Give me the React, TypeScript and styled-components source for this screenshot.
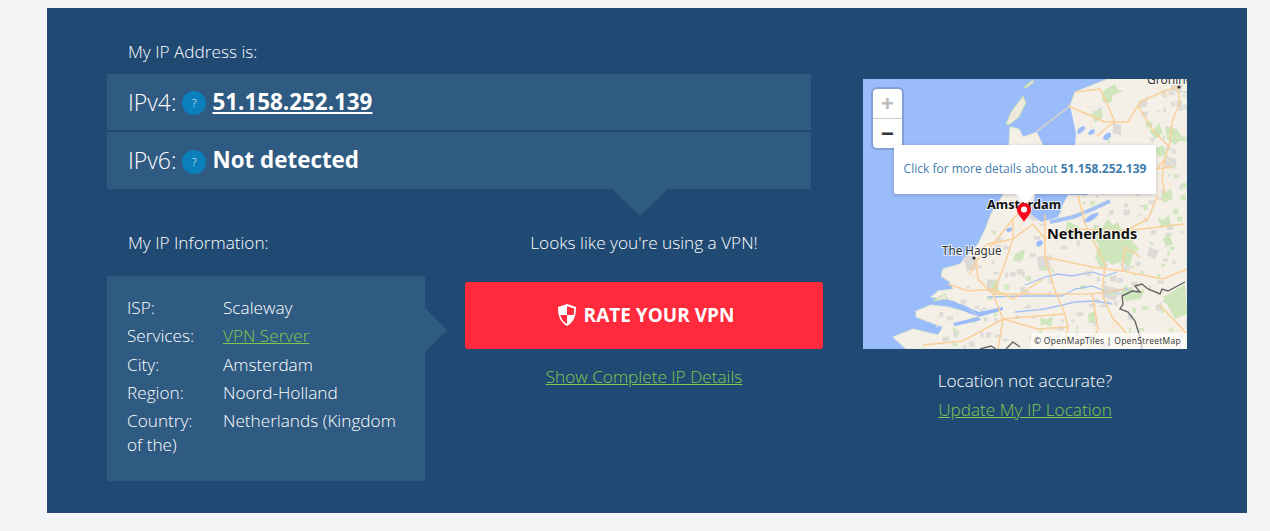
import React from "react";
import styled, { createGlobalStyle } from "styled-components";

const GlobalStyle = createGlobalStyle`
  html, body {
    margin: 0;
    background: #f2f4f6;
  }
  body {
    font-family: "Open Sans", "Liberation Sans", sans-serif;
    font-size: 17.2px;
    line-height: 24px;
    color: #fff;
    font-weight: 350;
  }
`;

const Page = styled.div`
  padding: 8px 0 18px 47px;
`;

const Panel = styled.section`
  width: 1200px;
  height: 505px;
  box-sizing: border-box;
  background: #204a73;
  padding: 32px 60px 0;
  display: flex;
  gap: 40px;
`;

const LeftCol = styled.div`
  width: 716px;
  flex: none;
`;

const Heading = styled.div`
  padding-left: 21px;
`;

const IpRows = styled.div`
  width: 704px;
  margin-top: 10px;
  display: flex;
  flex-direction: column;
  gap: 2px;
  position: relative;

  &::after {
    content: "";
    position: absolute;
    left: 505px;
    top: 100%;
    border-style: solid;
    border-width: 27px 28px 0;
    border-color: #2f5a82 transparent transparent;
  }
`;

const IpRow = styled.div<{ $h: number }>`
  height: ${(p) => p.$h}px;
  box-sizing: border-box;
  background: #2f5a82;
  padding: 0 0 1px 21px;
  display: flex;
  align-items: center;
  font-size: 23px;
  font-weight: 300;
`;

const Badge = styled.span`
  width: 24px;
  height: 24px;
  margin: 3px 6px 0;
  border-radius: 50%;
  background: #0a7fbb;
  font-size: 11px;
  line-height: 24px;
  text-align: center;
`;

const IpValue = styled.a`
  font-size: 22.4px;
  font-weight: 700;
  color: #fff;
  text-decoration: ${(p) => (p.href ? "underline" : "none")};
`;

const Bottom = styled.div`
  display: flex;
  gap: 40px;
  margin-top: 42px;
`;

const InfoCol = styled.div`
  width: 318px;
  flex: none;
`;

const InfoBox = styled.div`
  margin-top: 21px;
  height: 205px;
  box-sizing: border-box;
  background: #2f5a82;
  padding: 20px 20px 0;
  position: relative;

  &::after {
    content: "";
    position: absolute;
    left: 100%;
    top: 32px;
    border-style: solid;
    border-width: 22px 0 22px 22px;
    border-color: transparent transparent transparent #2f5a82;
  }
`;

const InfoLine = styled.div`
  margin-bottom: 4.3px;
`;

const InfoLabel = styled.span`
  display: inline-block;
  width: 96px;
`;

const GreenLink = styled.a`
  color: #80c950;
  text-decoration: underline;
`;

const RateCol = styled.div`
  width: 358px;
  flex: none;
  text-align: center;
`;

const RateButton = styled.button`
  width: 100%;
  height: 67px;
  margin: 27px 0 16px;
  padding: 0 0 2px 4px;
  border: 0;
  border-radius: 3px;
  background: #ff2b3d;
  color: #fff;
  font-family: "Open Sans", sans-serif;
  font-size: 19px;
  font-weight: 700;
  display: flex;
  align-items: center;
  justify-content: center;
  gap: 8px;
`;

const MapCol = styled.div`
  width: 324px;
  flex: none;
  padding-top: 39px;
  text-align: center;
`;

const MapBox = styled.div`
  width: 324px;
  height: 270px;
  position: relative;
  overflow: hidden;
  margin-bottom: 20px;
`;

const MapArt = styled.svg`
  display: block;
`;

const Zoom = styled.div`
  position: absolute;
  left: 10px;
  top: 10px;
  width: 29px;
  background: #fff;
  border-radius: 4px;
  box-shadow: 0 0 0 2px rgba(0, 0, 0, 0.15);
`;

const ZoomButton = styled.div<{ $off?: boolean }>`
  height: 29px;
  font-family: "Liberation Sans", sans-serif;
  font-size: 22px;
  font-weight: 700;
  line-height: 29px;
  text-align: center;
  color: ${(p) => (p.$off ? "#bbb" : "#333")};
  & + & {
    border-top: 1px solid #ccc;
  }
`;

const Popup = styled.div`
  position: absolute;
  left: 31px;
  top: 66px;
  width: 262px;
  height: 49px;
  background: #fff;
  border-radius: 2px;
  box-shadow: 0 1px 4px rgba(0, 0, 0, 0.2);
  color: #3f7cac;
  font-size: 12px;
  font-weight: 400;
  line-height: 47px;
  text-align: center;
  white-space: nowrap;

  &::after {
    content: "";
    position: absolute;
    left: 122px;
    top: 100%;
    border-style: solid;
    border-width: 10px 9px 0;
    border-color: #fff transparent transparent;
  }
`;

const Pin = styled.svg`
  position: absolute;
  left: 154px;
  top: 124px;
`;

const Attribution = styled.div`
  position: absolute;
  right: 0;
  bottom: 0;
  height: 16px;
  padding: 0 6px 0 3px;
  background: rgba(255, 255, 255, 0.6);
  color: #333;
  font-size: 8.5px;
  font-weight: 400;
  letter-spacing: 0.28px;
  line-height: 16px;
  white-space: nowrap;
`;

const LocationLink = styled.div`
  margin-top: 5px;
`;

const Road = styled.polyline`
  fill: none;
  stroke: #f9d09a;
  stroke-width: 1.5;
  stroke-linejoin: round;
`;

const MinorRoad = styled.polyline`
  fill: none;
  stroke: #fbe3c4;
  stroke-width: 0.8;
`;

const Label = styled.text<{ $size: number; $weight: number; $fill: string }>`
  font-family: "Noto Sans", sans-serif;
  font-size: ${(p) => p.$size}px;
  font-weight: ${(p) => p.$weight};
  fill: ${(p) => p.$fill};
  stroke: rgba(255, 255, 255, 0.75);
  stroke-width: 2px;
  paint-order: stroke;
`;

const land =
  "M245,0 L324,0 L324,270 L43,270 L30,258 L50,250 L75,256 L80,248 L53,238 L53,232 L68,226 L85,228 L100,232 L92,222 L68,218 L75,212 L90,210 L87,203 L78,197 L80,190 L97,185 L115,165 L122,151 L128,135 L140,116 L146,66 L147,48 L156,50 L160,58 L174,53 L207,27 L212,13 L232,5 Z";

const inlandWater = [
  "M174,53 L207,27 L210,40 L213,55 L212,66 L225,116 L205,116 L200,125 L195,138 L178,143 L168,135 L172,116 L180,66 Z",
  "M214,52 C216,48 221,46 222,48 C223,50 218,55 215,55 Z",
  "M225,54 C227,50 232,49 232,52 C232,55 226,58 225,54 Z",
  "M240,59 C241,55 247,52 248,55 C249,59 241,64 240,59 Z",
  "M220,143 C224,137 232,133 236,134 C234,139 226,145 220,143 Z",
  "M173,165 C174,161 179,160 180,163 C180,167 174,170 173,165 Z",
  "M83,220 L100,226 L116,233 L140,228 L140,231 L116,238 L98,231 L84,223 Z",
  "M90,244 L115,238 L118,241 L92,247 Z",
  "M143,151 C145,148 149,148 149,150 C149,153 144,155 143,151 Z",
];

const islands = [
  "M160,17 L163,24 L156,38 L146,46 L143,45 L148,33 Z",
  "M161,8 L170,1 L171,3 L163,9 Z",
  "M76,218 L82,215 L84,220 L70,222 Z",
];

const forests = [
  "M232,146 L238,150 L245,140 L250,146 L255,143 L258,150 L272,152 L268,160 L276,170 L270,176 L266,188 L258,182 L250,186 L244,182 L238,190 L232,178 L236,166 L228,156 Z",
  "M295,138 L300,141 L306,136 L308,148 L302,146 L298,149 Z",
  "M177,238 L183,241 L190,237 L188,248 L182,245 L178,247 Z",
  "M240,12 L252,5 L256,14 L250,16 L248,24 L239,22 Z",
  "M228,35 L238,30 L240,38 L232,44 Z",
  "M285,50 L290,52 L296,44 L300,54 L292,60 Z",
  "M302,47 L314,50 L322,62 L316,62 L312,66 L304,60 Z",
  "M292,70 L300,66 L304,75 L296,78 Z",
  "M298,115 L308,110 L310,120 L300,124 Z",
  "M152,175 L162,170 L160,180 L150,182 Z",
  "M128,205 L134,200 L136,212 L129,214 Z",
  "M262,206 L272,212 L282,210 L278,220 L262,222 L258,214 Z",
  "M300,218 L322,205 L324,235 L312,240 Z",
  "M204,142 L216,148 L212,160 L202,156 Z",
  "M300,160 L306,155 L310,165 L303,168 Z",
  "M225,235 L232,232 L232,244 L226,244 Z",
];

const urban = [
  "M100,178 L112,176 L115,190 L104,192 Z",
  "M124,200 L136,202 L134,214 L124,212 Z",
  "M174,178 L184,176 L188,190 L176,192 Z",
  "M240,206 L256,210 L252,222 L240,218 Z",
  "M158,122 L176,124 L172,140 L156,138 Z",
  "M250,44 L258,46 L258,56 L250,54 Z",
  "M308,3 L320,5 L318,14 L308,12 Z",
  "M275,22 L284,20 L284,28 L276,28 Z",
  "M302,78 L314,80 L312,90 L302,88 Z",
  "M286,168 L296,172 L292,180 L284,176 Z",
];

const roads = [
  "212,13 237,10 245,27 252,43 242,50 234,57",
  "205,27 219,33 242,43 252,43",
  "252,43 265,43 277,23 299,13 314,8",
  "314,8 317,23 309,43 307,63 302,80 294,90 309,88",
  "275,27 289,50 305,67",
  "302,80 299,100 302,115",
  "165,125 150,140 130,165 115,180 107,195",
  "110,175 125,165 150,160 170,145",
  "113,180 115,200 130,215 140,240 135,270",
  "85,205 105,212 130,210 150,220 165,210 180,200",
  "182,135 182,178 192,212 202,235 205,248 200,270",
  "162,215 229,215 262,210",
  "202,235 162,238 140,240",
  "229,188 259,192 262,168 277,178",
  "242,185 239,215 249,238 270,262",
  "262,152 322,145",
  "182,178 229,188",
  "170,145 182,160 210,150 262,152",
  "215,116 222,145 242,185",
  "259,192 300,200 324,190",
  "130,215 162,215",
  "60,266 100,262 140,240 175,250 205,248",
  "150,140 150,160 140,190 130,215",
  "295,116 285,140 262,152",
  "229,215 235,250 225,270",
  "296,225 324,255",
];

const rivers = [
  "162,206 182,198 195,195 209,197 229,193 242,197 254,193",
  "125,218 162,217 179,217 199,217 212,210 229,207 245,213 265,210",
  "152,233 182,230 212,223 232,222 249,225",
];

const border =
  "322,203 305,212 299,210 297,215 285,210 279,205 272,207 277,213 269,212 259,217 260,225 257,230 265,233 272,242 277,258 279,270";

// little villages, woods and side roads, scattered the same way on every render
type Speck = { x: number; y: number; w: number; h: number; green: boolean };

const onLand = (x: number, y: number) => {
  if (y < 116) return x > 218 + (y < 27 ? 27 - y : 0);
  return x > 136 - (y - 135) * 0.62;
};

const makeSpecks = () => {
  const out: Speck[] = [];
  let seed = 7919;
  const next = () => {
    seed = (seed * 16807) % 2147483647;
    return seed / 2147483647;
  };
  for (let i = 0; i < 420; i++) {
    const x = next() * 324;
    const y = next() * 270;
    const w = 2 + next() * 5;
    const h = 2 + next() * 4;
    const green = next() < 0.3;
    if (onLand(x, y)) out.push({ x, y, w, h, green });
  }
  return out;
};

const makeSideRoads = () => {
  const out: string[] = [];
  let seed = 104729;
  const next = () => {
    seed = (seed * 48271) % 2147483647;
    return seed / 2147483647;
  };
  for (let i = 0; i < 90; i++) {
    const x = next() * 324;
    const y = next() * 270;
    if (!onLand(x, y)) continue;
    const x2 = x + (next() - 0.5) * 34;
    const y2 = y + (next() - 0.5) * 30;
    if (onLand(x2, y2)) out.push(`${x.toFixed(1)},${y.toFixed(1)} ${x2.toFixed(1)},${y2.toFixed(1)}`);
  }
  return out;
};

const specks = makeSpecks();
const sideRoads = makeSideRoads();

const info = [
  { label: "ISP:", value: "Scaleway" },
  { label: "Services:", value: "VPN Server", href: "#" },
  { label: "City:", value: "Amsterdam" },
  { label: "Region:", value: "Noord-Holland" },
  { label: "Country:", value: "Netherlands (Kingdom of the)" },
];

const App = () => {
  return (
    <Page>
      <GlobalStyle />
      <Panel>
        <LeftCol>
          <Heading>My IP Address is:</Heading>
          <IpRows>
            <IpRow $h={56}>
              IPv4:<Badge>?</Badge>
              <IpValue href="#">51.158.252.139</IpValue>
            </IpRow>
            <IpRow $h={57}>
              IPv6:<Badge>?</Badge>
              <IpValue>Not detected</IpValue>
            </IpRow>
          </IpRows>
          <Bottom>
            <InfoCol>
              <Heading>My IP Information:</Heading>
              <InfoBox>
                {info.map((row) => (
                  <InfoLine key={row.label}>
                    <InfoLabel>{row.label}</InfoLabel>
                    {row.href ? <GreenLink href={row.href}>{row.value}</GreenLink> : row.value}
                  </InfoLine>
                ))}
              </InfoBox>
            </InfoCol>
            <RateCol>
              <div>Looks like you're using a VPN!</div>
              <RateButton>
                <svg width="18" height="22" viewBox="0 0 18 22">
                  <path d="M9 0 L18 3 C18 12 16 18 9 22 C2 18 0 12 0 3 Z" fill="#fff" />
                  <path d="M9 2.2 L16.2 4.5 C16.2 6.5 16 9 15.6 11 L9 11 Z" fill="#ff2b3d" />
                  <path d="M9 11 L2.4 11 C3.2 14.8 5.2 18 9 20 Z" fill="#ff2b3d" />
                </svg>
                RATE YOUR VPN
              </RateButton>
              <GreenLink href="#">Show Complete IP Details</GreenLink>
            </RateCol>
          </Bottom>
        </LeftCol>
        <MapCol>
          <MapBox>
            <MapArt width="324" height="270" viewBox="0 0 324 270">
              <rect width="324" height="270" fill="#9bbcfa" />
              <g style={{ filter: "blur(0.45px)" }}>
                <path d={land} fill="#f4f0e8" stroke="#dfe8d0" strokeWidth="1" />
                {islands.map((d) => (
                  <path key={d} d={d} fill="#eee9dc" stroke="#bcdcae" strokeWidth="1" />
                ))}
                {urban.map((d) => (
                  <path key={d} d={d} fill="#dcdad6" />
                ))}
                {specks.map((s) => (
                  <rect
                    key={`${s.x}-${s.y}`}
                    x={s.x}
                    y={s.y}
                    width={s.w}
                    height={s.h}
                    rx="1"
                    fill={s.green ? "#d3e8c2" : "#dedcd8"}
                  />
                ))}
                {forests.map((d) => (
                  <path key={d} d={d} fill="#cfe6bd" />
                ))}
                {inlandWater.map((d) => (
                  <path key={d} d={d} fill="#9bbcfa" />
                ))}
                <line x1="174" y1="52" x2="207" y2="27" stroke="#d6cfc2" strokeWidth="1.5" />
                <polyline points="187,143 210,138 230,130 247,122" fill="none" stroke="#a5c2f2" strokeWidth="4" />
                {rivers.map((pts) => (
                  <polyline key={pts} points={pts} fill="none" stroke="#a5c2f2" strokeWidth="1.3" />
                ))}
                {sideRoads.map((pts) => (
                  <MinorRoad key={pts} points={pts} />
                ))}
                {roads.map((pts) => (
                  <Road key={pts} points={pts} />
                ))}
                <polyline points={border} fill="none" stroke="#666" strokeWidth="1.4" />
                <polyline points="117,270 128,267 133,270" fill="none" stroke="#666" strokeWidth="1.4" />
                <polyline points="143,270 150,263 157,268" fill="none" stroke="#666" strokeWidth="1.4" />
                <circle cx="111" cy="179" r="1.6" fill="#333" />
                <circle cx="316" cy="8" r="1.6" fill="#333" />
              </g>
              <Label x="284" y="5" $size={12} $weight={400} $fill="#333">Groningen</Label>
              <Label x="124" y="130" $size={12.7} $weight={700} $fill="#111">Amsterdam</Label>
              <Label x="184" y="160" $size={14.5} $weight={700} $fill="#111">Netherlands</Label>
              <Label x="79" y="176" $size={11.7} $weight={400} $fill="#333">The Hague</Label>
            </MapArt>
            <Zoom>
              <ZoomButton $off>+</ZoomButton>
              <ZoomButton>−</ZoomButton>
            </Zoom>
            <Popup>
              Click for more details about <b>51.158.252.139</b>
            </Popup>
            <Pin width="14" height="19" viewBox="0 0 14 19">
              <path d="M7 0 C11 0 14 3 14 7 C14 11 9.5 14.5 7 19 C4.5 14.5 0 11 0 7 C0 3 3 0 7 0 Z" fill="#f5081c" />
              <circle cx="7" cy="6.5" r="3" fill="#fff" />
            </Pin>
            <Attribution>© OpenMapTiles | OpenStreetMap</Attribution>
          </MapBox>
          <div>Location not accurate?</div>
          <LocationLink>
            <GreenLink href="#">Update My IP Location</GreenLink>
          </LocationLink>
        </MapCol>
      </Panel>
    </Page>
  );
};

export default App;
